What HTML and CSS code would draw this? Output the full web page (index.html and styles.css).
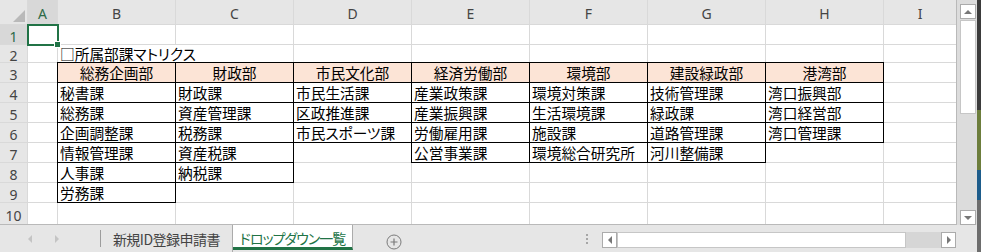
FILE: index.html
```html
<!DOCTYPE html>
<html lang="ja">
<head>
    <meta charset="UTF-8">
    <title>ドロップダウン一覧</title>
    <link rel="stylesheet" href="styles.css">
</head>
<body>
    <div class="app">
        <div class="top">
            <div class="sheet">
                <!-- column headers -->
                <div class="corner">
                    <svg width="27" height="24" viewBox="0 0 27 24"><polygon points="25,10 25,22 13,22" fill="#b9b9b9"/></svg>
                </div>
                <div class="colhdr on">A</div>
                <div class="colhdr">B</div>
                <div class="colhdr">C</div>
                <div class="colhdr">D</div>
                <div class="colhdr">E</div>
                <div class="colhdr">F</div>
                <div class="colhdr">G</div>
                <div class="colhdr">H</div>
                <div class="colhdr">I</div>

                <!-- row 1 -->
                <div class="rowhdr on">1</div>
                <div class="cell active"></div>
                <div class="cell"></div>
                <div class="cell"></div>
                <div class="cell"></div>
                <div class="cell"></div>
                <div class="cell"></div>
                <div class="cell"></div>
                <div class="cell"></div>
                <div class="cell"></div>

                <!-- row 2 -->
                <div class="rowhdr">2</div>
                <div class="cell"></div>
                <div class="cell title">□所属部課マトリクス</div>
                <div class="cell"></div>
                <div class="cell"></div>
                <div class="cell"></div>
                <div class="cell"></div>
                <div class="cell"></div>
                <div class="cell"></div>

                <!-- row 3 -->
                <div class="rowhdr">3</div>
                <div class="cell"></div>
                <div class="cell boxed dept">総務企画部</div>
                <div class="cell boxed dept">財政部</div>
                <div class="cell boxed dept">市民文化部</div>
                <div class="cell boxed dept">経済労働部</div>
                <div class="cell boxed dept">環境部</div>
                <div class="cell boxed dept">建設緑政部</div>
                <div class="cell boxed dept">港湾部</div>
                <div class="cell"></div>

                <!-- row 4 -->
                <div class="rowhdr">4</div>
                <div class="cell"></div>
                <div class="cell boxed">秘書課</div>
                <div class="cell boxed">財政課</div>
                <div class="cell boxed">市民生活課</div>
                <div class="cell boxed">産業政策課</div>
                <div class="cell boxed">環境対策課</div>
                <div class="cell boxed">技術管理課</div>
                <div class="cell boxed">湾口振興部</div>
                <div class="cell"></div>

                <!-- row 5 -->
                <div class="rowhdr">5</div>
                <div class="cell"></div>
                <div class="cell boxed">総務課</div>
                <div class="cell boxed">資産管理課</div>
                <div class="cell boxed">区政推進課</div>
                <div class="cell boxed">産業振興課</div>
                <div class="cell boxed">生活環境課</div>
                <div class="cell boxed">緑政課</div>
                <div class="cell boxed">湾口経営部</div>
                <div class="cell"></div>

                <!-- row 6 -->
                <div class="rowhdr">6</div>
                <div class="cell"></div>
                <div class="cell boxed">企画調整課</div>
                <div class="cell boxed">税務課</div>
                <div class="cell boxed">市民スポーツ課</div>
                <div class="cell boxed">労働雇用課</div>
                <div class="cell boxed">施設課</div>
                <div class="cell boxed">道路管理課</div>
                <div class="cell boxed">湾口管理課</div>
                <div class="cell"></div>

                <!-- row 7 -->
                <div class="rowhdr">7</div>
                <div class="cell"></div>
                <div class="cell boxed">情報管理課</div>
                <div class="cell boxed">資産税課</div>
                <div class="cell"></div>
                <div class="cell boxed">公営事業課</div>
                <div class="cell boxed">環境総合研究所</div>
                <div class="cell boxed">河川整備課</div>
                <div class="cell"></div>
                <div class="cell"></div>

                <!-- row 8 -->
                <div class="rowhdr">8</div>
                <div class="cell"></div>
                <div class="cell boxed">人事課</div>
                <div class="cell boxed">納税課</div>
                <div class="cell"></div>
                <div class="cell"></div>
                <div class="cell"></div>
                <div class="cell"></div>
                <div class="cell"></div>
                <div class="cell"></div>

                <!-- row 9 -->
                <div class="rowhdr">9</div>
                <div class="cell"></div>
                <div class="cell boxed">労務課</div>
                <div class="cell"></div>
                <div class="cell"></div>
                <div class="cell"></div>
                <div class="cell"></div>
                <div class="cell"></div>
                <div class="cell"></div>
                <div class="cell"></div>

                <!-- row 10 -->
                <div class="rowhdr">10</div>
                <div class="cell"></div>
                <div class="cell"></div>
                <div class="cell"></div>
                <div class="cell"></div>
                <div class="cell"></div>
                <div class="cell"></div>
                <div class="cell"></div>
                <div class="cell"></div>
                <div class="cell"></div>
            </div>

            <!-- vertical scroll bar -->
            <div class="vscroll">
                <div class="sbtn"><span class="arrow-up"></span></div>
                <div class="vthumb"></div>
                <div class="vtrack"></div>
                <div class="sbtn"><span class="arrow-down"></span></div>
            </div>
        </div>

        <!-- sheet tabs -->
        <div class="tabbar">
            <div class="nav">
                <span class="arrow-left light"></span>
                <span class="arrow-right light"></span>
            </div>
            <div class="sep"></div>
            <div class="tab">新規ID登録申請書</div>
            <div class="tab current">ドロップダウン一覧</div>
            <div class="add">
                <svg width="16" height="16" viewBox="0 0 16 16">
                    <circle cx="8" cy="8" r="7" fill="none" stroke="#7b7b7b" stroke-width="1"/>
                    <path d="M4.5 8h7M8 4.5v7" stroke="#7b7b7b" stroke-width="1.2"/>
                </svg>
            </div>
            <div class="dots"><span></span><span></span><span></span></div>
            <div class="hscroll">
                <div class="sbtn"><span class="arrow-left"></span></div>
                <div class="hthumb"></div>
                <div class="htrack"></div>
                <div class="sbtn"><span class="arrow-right"></span></div>
            </div>
        </div>
    </div>
    <div class="edge"></div>
</body>
</html>
```

FILE: styles.css
```css
body {
    margin: 0;
    display: flex;
    width: 981px;
    height: 252px;
    overflow: hidden;
    background-color: #e6e6e6;
    font-family: "Noto Sans CJK JP", sans-serif;
}

.app {
    width: 977px;
    display: flex;
    flex-direction: column;
}

.top {
    display: flex;
    height: 225px;
}

/* grid lines are the 1px gaps showing the sheet background */
.sheet {
    width: 956px;
    height: 224px;
    display: grid;
    grid-template-columns: 27px 29px repeat(7, 117px) 72px;
    grid-template-rows: 24px 19px 17px repeat(7, 19px) 21px;
    gap: 1px;
    background-color: #d9d9d9;
    border-right: 1px solid #b9b9b9;
    border-bottom: 1px solid #b9b9b9;
}

.corner, .colhdr, .rowhdr {
    background-color: #e6e6e6;
    color: #444;
    font-family: "Noto Sans", sans-serif;
    font-size: 14px;
    display: flex;
    align-items: center;
    justify-content: center;
}

.corner {
    align-items: stretch;
}

.colhdr {
    padding-top: 2px;
}

.rowhdr {
    padding-top: 3px;
}

.colhdr.on, .rowhdr.on {
    background-color: #d8d8d8;
    color: #2e6b48;
}

.cell {
    background-color: #fff;
    font-size: 14.7px;
    line-height: 19px;
    padding-left: 2px;
    white-space: nowrap;
    font-feature-settings: "palt";
    color: #000;
}

.cell.title {
    grid-column: span 2;
    line-height: 17px;
}

.cell.boxed {
    box-shadow: 0 0 0 1px #000;
}

.cell.dept {
    background-color: #fce4d6;
    text-align: center;
    padding-left: 0;
}

/* selected cell A1 */
.cell.active {
    position: relative;
}

.cell.active::after {
    content: "";
    position: absolute;
    left: -1px;
    top: -1px;
    right: -2px;
    bottom: -2px;
    border: 2px solid #217346;
    z-index: 2;
}

.cell.active::before {
    content: "";
    position: absolute;
    right: -4px;
    bottom: -4px;
    width: 5px;
    height: 5px;
    background-color: #217346;
    border: 1px solid #fff;
    z-index: 3;
}

/* scroll bars */
.vscroll {
    width: 20px;
    height: 225px;
    box-sizing: border-box;
    padding: 4px 1px 0 3px;
    background-color: #dcdcdc;
    display: flex;
    flex-direction: column;
}

.sbtn {
    width: 16px;
    height: 15px;
    box-sizing: border-box;
    background-color: #fff;
    border: 1px solid #ababab;
    display: flex;
    align-items: center;
    justify-content: center;
    flex-shrink: 0;
}

.vthumb {
    height: 94px;
    margin-top: 1px;
    background-color: #fff;
    border: 1px solid #c6c6c6;
    box-sizing: border-box;
}

.vtrack, .htrack {
    flex: 1;
}

.arrow-up, .arrow-down, .arrow-left, .arrow-right {
    width: 0;
    height: 0;
}

.arrow-up {
    border-left: 4px solid transparent;
    border-right: 4px solid transparent;
    border-bottom: 4px solid #777;
}

.arrow-down {
    border-left: 4px solid transparent;
    border-right: 4px solid transparent;
    border-top: 4px solid #777;
}

.arrow-left {
    border-top: 4px solid transparent;
    border-bottom: 4px solid transparent;
    border-right: 4px solid #777;
}

.arrow-right {
    border-top: 4px solid transparent;
    border-bottom: 4px solid transparent;
    border-left: 4px solid #777;
}

.arrow-left.light {
    border-right-color: #c4c4c4;
}

.arrow-right.light {
    border-left-color: #c4c4c4;
}

/* sheet tabs */
.tabbar {
    height: 27px;
    display: flex;
    align-items: center;
    background-color: #e6e6e6;
}

.nav {
    width: 100px;
    display: flex;
    align-items: center;
    gap: 23px;
    padding-left: 28px;
    box-sizing: border-box;
}

.sep {
    width: 1px;
    height: 17px;
    background-color: #9c9c9c;
}

.tab {
    width: 132px;
    height: 27px;
    display: flex;
    align-items: center;
    justify-content: center;
    border-right: 1px solid #ababab;
    font-size: 14px;
    letter-spacing: -0.5px;
    white-space: nowrap;
    color: #444;
    font-feature-settings: "palt";
    padding-top: 1px;
    box-sizing: border-box;
}

.tab.current {
    width: 120px;
    height: 25px;
    align-self: flex-start;
    background-color: #fff;
    color: #217346;
    letter-spacing: -1px;
    border-bottom: 3px solid #217346;
    padding-top: 3px;
}

.add {
    margin-left: 33px;
    height: 16px;
}

.dots {
    margin-left: 184px;
    width: 2px;
    display: flex;
    flex-direction: column;
    gap: 2px;
}

.dots span {
    width: 2px;
    height: 2px;
    background-color: #a6a6a6;
}

.hscroll {
    margin-left: 14px;
    width: 354px;
    height: 16px;
    align-self: flex-start;
    margin-top: 7px;
    display: flex;
    background-color: #d6d6d6;
}

.hscroll .sbtn {
    width: 15px;
    height: 16px;
}

.hthumb {
    width: 289px;
    background-color: #fff;
    border: 1px solid #c6c6c6;
    box-sizing: border-box;
}

.edge {
    width: 4px;
    background: linear-gradient(#3b3b3b 0, #3b3b3b 110px, #6c7d3c 110px, #6c7d3c 170px, #1d5c8b 170px, #1d5c8b 200px, #6d6d6d 200px);
}
```
